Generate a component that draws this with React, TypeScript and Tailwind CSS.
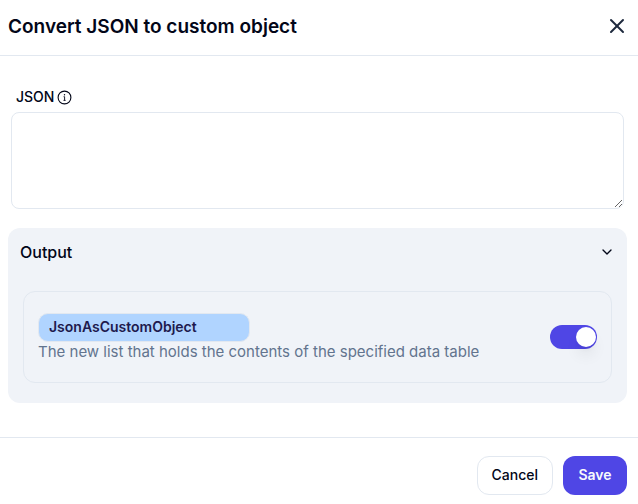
import { useState } from "react";
import { ChevronDown, X } from "lucide-react";

function InfoIcon() {
  return (
    <svg width="15" height="15" viewBox="0 0 15 15" fill="none" stroke="currentColor" aria-hidden="true">
      <circle cx="7.5" cy="7.5" r="6.4" strokeWidth="1.1" />
      <path d="M6.6 6.7h1v3.6M6.5 10.4h2.1" strokeWidth="0.9" />
      <circle cx="7.5" cy="4.7" r="0.7" fill="currentColor" stroke="none" />
    </svg>
  );
}

function DialogHeader() {
  return (
    <header className="flex h-14 items-center justify-between border-b border-slate-200 pr-[9px] pb-[3px] pl-2">
      <h1 className="pt-0.5 text-[19px] font-semibold text-slate-950">Convert JSON to custom object</h1>
      <button type="button" aria-label="Close" className="text-slate-800">
        <X size={24} strokeWidth={2} />
      </button>
    </header>
  );
}

function JsonField() {
  return (
    <div className="flex flex-col px-[3px]">
      <div className="flex h-6 items-center gap-[3px] pl-[5px] text-slate-950">
        <label htmlFor="json" className="text-sm font-medium">
          JSON
        </label>
        <InfoIcon />
      </div>
      <textarea
        id="json"
        className="mt-[3px] block h-[97px] w-full resize rounded-lg border border-slate-200 bg-white p-2 text-sm outline-none"
      />
    </div>
  );
}

function OutputPanel() {
  const [open, setOpen] = useState(true);
  const [enabled, setEnabled] = useState(true);
  const [name, setName] = useState("JsonAsCustomObject");

  return (
    <section className="rounded-xl bg-[#f0f3f8] px-[15px] pb-5">
      <button
        type="button"
        aria-expanded={open}
        onClick={() => setOpen(!open)}
        className="-mx-[3px] flex h-12 w-[calc(100%+6px)] items-center justify-between text-slate-950"
      >
        <span className="text-base font-medium">Output</span>
        <ChevronDown size={16} strokeWidth={2} className={open ? "" : "-rotate-90"} />
      </button>
      {open && (
        <div className="mt-[15px] flex items-center justify-between rounded-xl border border-slate-200 px-[14px] py-5">
          <div className="flex flex-col pt-px">
            <input
              aria-label="Output name"
              value={name}
              onChange={(e) => setName(e.target.value)}
              className="h-[29px] w-[212px] rounded-[10px] border border-slate-200 bg-[#b0d4ff] px-[10px] pb-0.5 text-sm font-semibold text-indigo-950 outline-none"
            />
            <p className="text-[15px] leading-5 text-slate-500">
              The new list that holds the contents of the specified data table
            </p>
          </div>
          <label className="relative block h-6 w-[47px] shrink-0 rounded-full bg-slate-300 p-0.5 has-checked:bg-[#4f46e5]">
            <input
              type="checkbox"
              role="switch"
              aria-label="Include output"
              checked={enabled}
              onChange={(e) => setEnabled(e.target.checked)}
              className="peer sr-only"
            />
            <span className="block size-5 rounded-full bg-white shadow-lg peer-checked:translate-x-6" />
          </label>
        </div>
      )}
    </section>
  );
}

export default function App() {
  return (
    <main className="flex w-full flex-col bg-white font-['Inter',sans-serif]">
      <DialogHeader />
      <div className="flex flex-col gap-[19px] pt-[29px] pr-[11px] pb-[34px] pl-2">
        <JsonField />
        <OutputPanel />
      </div>
      <footer className="flex justify-end gap-[10px] border-t border-slate-200 pt-[18px] pr-[11px] pb-[9px]">
        <button
          type="button"
          className="h-[39px] rounded-xl border border-slate-200 bg-white px-[14px] pb-0.5 text-sm font-medium text-slate-950"
        >
          Cancel
        </button>
        <button
          type="button"
          className="h-[39px] w-16 rounded-xl bg-[#4f46e5] pb-0.5 text-sm font-semibold text-slate-50"
        >
          Save
        </button>
      </footer>
    </main>
  );
}
